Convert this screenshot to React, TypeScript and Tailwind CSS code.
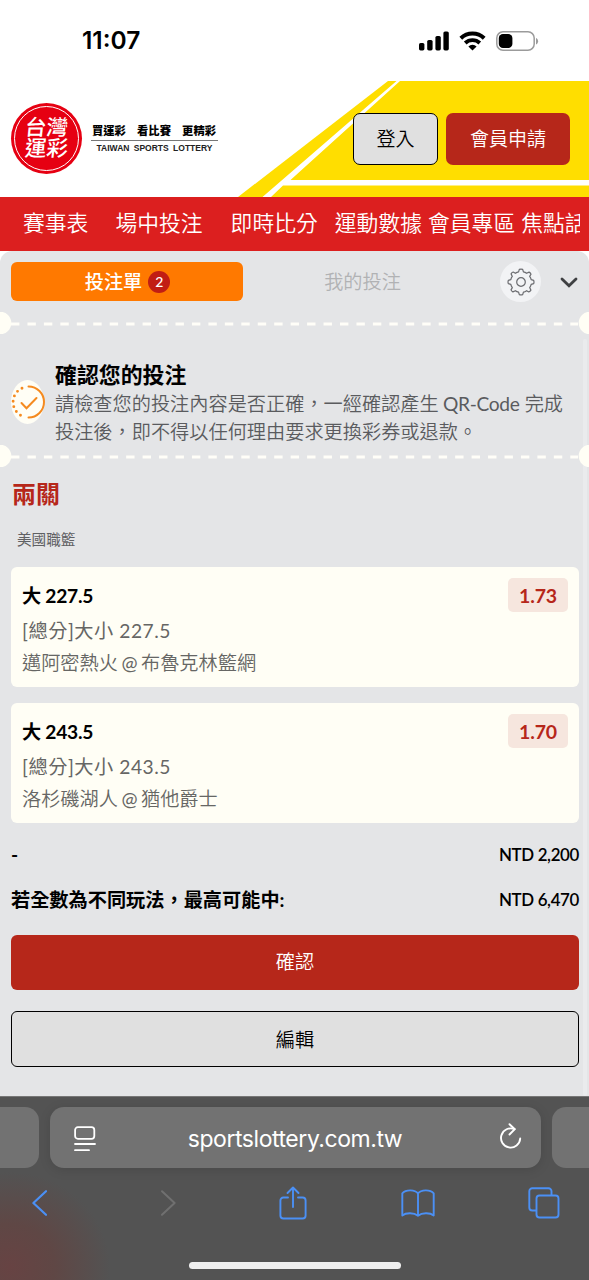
import type { ReactNode } from "react";
import { clsx } from "clsx";

type Pick = { title: string; market: string; away: string; home: string; odds: string };

const PICKS: Pick[] = [
  { title: "大 227.5", market: "[總分]大小 227.5", away: "邁阿密熱火",   home: "布魯克林籃網", odds: "1.73" },
  { title: "大 243.5", market: "[總分]大小 243.5", away: "洛杉磯湖人",   home: "猶他爵士",     odds: "1.70" },
];

const NAV = [
  { label: "賽事表",   gap: "mr-[27px]" },
  { label: "場中投注", gap: "mr-[28px]" },
  { label: "即時比分", gap: "mr-[17px]" },
  { label: "運動數據", gap: "mr-[6px]" },
  { label: "會員專區", gap: "mr-[6px]" },
  { label: "焦點話題", gap: "" },
];

export default function App() {
  return (
    <div className="flex flex-col w-[589px] h-[1280px] overflow-hidden bg-white font-[Lato,'Noto_Sans_CJK_TC',sans-serif]">
      <StatusBar />
      <Header />
      <NavBar />
      <BetSlip />
      <BrowserBar />
    </div>
  );
}

function StatusBar() {
  return (
    <div className="flex items-center justify-between h-[81px] shrink-0 pl-[82px] pr-[50px] font-[Inter,sans-serif]">
      <span className="text-[24.5px] font-semibold leading-[81px] text-black">11:07</span>
      <div className="flex items-center">
        <svg width="30" height="20" viewBox="0 0 30 20">
          <rect x="0" y="12" width="5.4" height="7.4" rx="1.6" />
          <rect x="8.2" y="9" width="5.4" height="10.4" rx="1.6" />
          <rect x="16.4" y="5" width="5.4" height="14.4" rx="1.6" />
          <rect x="24.4" y="0.5" width="5.4" height="18.9" rx="1.6" />
        </svg>
        <svg className="ml-[10px]" width="27" height="20" viewBox="0 0 27 20">
          <path d="M1.8 7.2a17 17 0 0 1 23.4 0" fill="none" stroke="#000" strokeWidth="4" />
          <path d="M6.2 12a10.6 10.6 0 0 1 14.6 0" fill="none" stroke="#000" strokeWidth="3.8" />
          <path d="M13.5 19.5 9.4 15.5a5.9 5.9 0 0 1 8.2 0z" />
        </svg>
        <svg className="ml-[10px]" width="43" height="20" viewBox="0 0 43 20">
          <rect x="0.8" y="0.8" width="37.4" height="18.4" rx="6.2" fill="none" stroke="#9b9b9b" strokeWidth="1.5" />
          <rect x="2.8" y="2.9" width="13.6" height="14.2" rx="4.2" />
          <path d="M40 7v6.4c1.3-.5 2.1-1.7 2.1-3.2S41.3 7.500 40 7z" fill="#9b9b9b" />
        </svg>
      </div>
    </div>
  );
}

function Header() {
  return (
    <header className="relative flex items-center h-[115.5px] shrink-0 pl-[11px] pr-[19px]">
      {/* yellow court stripes behind the buttons */}
      <svg className="absolute right-0 top-0" width="351" height="116" viewBox="0 0 351 116">
        <path d="M150 0H351V116H0z" fill="#ffde00" />
        <path d="M158.500 0h3.500L52.500 99H351v5.500H45L33 116h-8.500z" fill="#fff" />
      </svg>

      <div className="relative flex flex-col items-center justify-center size-[71px] rounded-full bg-[#e60012]">
        <div className="absolute inset-[3px] rounded-full border border-white" />
        <div className="text-white text-[21.500px] leading-[21px] font-medium text-center -mt-[1px]">
          <div className="-skew-x-6">台灣</div>
          <div className="-skew-x-6">運彩</div>
        </div>
      </div>

      <div className="relative w-[127px] ml-[9px] -mt-[3px]">
        <div className="flex justify-between pl-[1px] pr-[2px] text-[11.300px] leading-[17px] font-black text-black whitespace-nowrap">
          <span>買運彩</span><span>看比賽</span><span>更精彩</span>
        </div>
        <div className="h-px mt-[1px] bg-[#777]" />
        <div className="mt-[2px] text-center text-[8.500px] leading-[10px] font-bold whitespace-nowrap text-[#222] font-['Liberation_Sans',sans-serif] [word-spacing:2px]">
          TAIWAN SPORTS LOTTERY
        </div>
      </div>

      <div className="relative flex gap-2 ml-auto text-[19px] font-[350] mt-px">
        <button className="w-[85px] h-[52px] rounded-[7px] border-[1.500px] border-black bg-[#e0e0e0] text-black">登入</button>
        <button className="w-[124px] h-[52px] rounded-[7px] bg-[#b6271a] text-white">會員申請</button>
      </div>
    </header>
  );
}

function NavBar() {
  return (
    <nav className="h-[54.5px] shrink-0 bg-[#dc1f1f] pl-[23px] pr-[9px]">
      <div className="flex h-full items-center overflow-hidden text-[21.800px] text-white font-[350]">
        {NAV.map((n) => (
          <span key={n.label} className={clsx("shrink-0 whitespace-nowrap", n.gap)}>{n.label}</span>
        ))}
      </div>
    </nav>
  );
}

function BetSlip() {
  return (
    <main className="relative flex-1 min-h-0 rounded-t-[12px] bg-[#e4e5e7] text-[19.200px]">
      {/* scroll thumb */}
      <div className="absolute right-[2px] top-[88px] bottom-0 w-[4px] rounded-full bg-[#eaebed]" />

      {/* Tabs */}
      <div className="flex items-center h-[61px] pl-[11px] pr-[11px]">
        <div className="flex items-center justify-center w-[232px] h-[39px] pt-[1px] pl-[1px] rounded-[6px] bg-[#ff7900] text-white font-medium">
          投注單
          <span className="flex items-center justify-center size-[22px] ml-[6px] -mt-px rounded-full bg-[#c11d14] text-[14px]">2</span>
        </div>
        <div className="w-[239px] pt-[2px] text-center font-[350] text-[#b1b2b4]">我的投注</div>
        <div className="flex items-center justify-center size-[41px] ml-[18px] rounded-full bg-[#f2f3f5]">
          <Gear />
        </div>
        <svg className="ml-[19px] mt-[2px]" width="18" height="11" viewBox="0 0 18 11">
          <path d="M2 2l7 6.800L16 2" fill="none" stroke="#3f4042" strokeWidth="2.800" strokeLinecap="round" />
        </svg>
      </div>

      <Perforation />

      {/* Confirmation notice */}
      <div className="flex items-center h-[111px] pl-[11px]">
        <div className="flex items-center justify-center w-[33px] h-[44px] shrink-0 rounded-[50%] bg-[#fffef5] mt-[25px]">
          <ConfirmMark />
        </div>
        <div className="ml-[11px] pt-[27px] whitespace-nowrap">
          <div className="text-[21.900px] leading-[30px] font-bold text-black">確認您的投注</div>
          <div className="leading-[28px] font-[350] text-[#5a5b5e]">
            請檢查您的投注內容是否正確，一經確認產生 <span className="font-normal tracking-[-0.350px] -ml-px">QR-Code</span> 完成
            <br />
            投注後，即不得以任何理由要求更換彩券或退款。
          </div>
        </div>
      </div>

      <Perforation />

      <h2 className="mt-[9px] ml-[12px] text-[24px] leading-[36px] font-bold text-[#b6271a]">兩關</h2>
      <div className="mt-[17px] ml-[17px] text-[14.600px] leading-[22px] text-[#5f6063]">美國職籃</div>

      <div className="flex flex-col gap-4 mt-[16px] ml-[11px] mr-[10px]">
        {PICKS.map((p) => <PickCard key={p.title} pick={p} />)}
      </div>

      {/* Totals */}
      <TotalRow label="-" value="NTD 2,200" className="mt-[17px]" />
      <TotalRow label="若全數為不同玩法，最高可能中:" value="NTD 6,470" className="mt-[15px]" />

      <div className="flex flex-col gap-[21px] mt-[20px] ml-[11px] mr-[10px] font-[350]">
        <button className="h-[55px] rounded-[6px] bg-[#b6271a] text-white">確認</button>
        <button className="h-[56px] pt-[2px] rounded-[6px] border-[1.500px] border-black bg-[#e0e0e0] text-black">編輯</button>
      </div>
    </main>
  );
}

function PickCard({ pick }: { pick: Pick }) {
  return (
    <div className="flex justify-between h-[120px] rounded-[6px] bg-[#fffef5] pl-[11px] pr-[11px] pt-[11px]">
      <div className="pt-px whitespace-nowrap text-[#666664] font-[350]">
        <div className="leading-[34px] font-bold text-black tracking-[-0.250px]">{pick.title}</div>
        <div className="mt-[2px] leading-[32px] tracking-[0.550px] font-normal">{pick.market}</div>
        <div className="leading-[32px]">
          {pick.away}<span className="mx-[3.500px] font-normal">@</span>{pick.home}
        </div>
      </div>
      <div className="w-[60px] h-[34px] rounded-[5px] bg-[#f6e6de] text-center text-[19.500px] tracking-[-0.200px] leading-[35px] font-bold text-[#b6271a]">
        {pick.odds}
      </div>
    </div>
  );
}

function TotalRow({ label, value, className }: { label: string; value: string; className: string }) {
  return (
    <div className={clsx("flex items-center justify-between h-[30px] pl-[11px] pr-[10px] font-bold text-black", className)}>
      <span>{label}</span>
      <span className="text-[16.900px] font-semibold tracking-[-0.350px]">{value}</span>
    </div>
  );
}

// ticket tear line with a notch at each edge
function Perforation() {
  return (
    <svg className="relative block" width="589" height="22" viewBox="0 0 589 22">
      <path d="M11 12H578" stroke="#fffef8" strokeWidth="3" strokeDasharray="8.400 8.050" />
      <circle cx="0" cy="11" r="11.300" fill="#fffef5" />
      <circle cx="590" cy="11" r="11.300" fill="#fffef5" />
    </svg>
  );
}

function Gear() {
  return (
    <svg width="28" height="28" viewBox="-15 -15 30 30" fill="none" stroke="#6b6c70" strokeWidth="1.300" strokeLinejoin="round">
      <path d="M-1.800-13.600Q0-14.200 1.800-13.600L2.600-10.900Q4.500-10.500 6-9.300L8.700-10.600Q10.200-9.800 10.700-8.400L9.300-6Q10.600-4.300 10.900-2.600L13.600-1.800Q14.200 0 13.600 1.800L10.900 2.600Q10.500 4.500 9.300 6L10.600 8.700Q9.800 10.200 8.400 10.700L6 9.300Q4.300 10.600 2.600 10.900L1.800 13.600Q0 14.200-1.800 13.600L-2.600 10.900Q-4.500 10.500-6 9.300L-8.700 10.600Q-10.200 9.800-10.700 8.400L-9.300 6Q-10.600 4.300-10.900 2.600L-13.600 1.800Q-14.200 0-13.600-1.800L-10.900-2.600Q-10.500-4.500-9.300-6L-10.600-8.700Q-9.800-10.200-8.400-10.700L-6-9.300Q-4.300-10.600-2.600-10.900Z" />
      <circle r="4.600" />
    </svg>
  );
}

function ConfirmMark() {
  return (
    <svg className="shrink-0" width="34" height="34" viewBox="0 0 34 34" fill="none" stroke="#f58a1f" strokeLinecap="round">
      <path d="M17.500 1.500a15.500 15.500 0 0 1 0 31" strokeWidth="2" />
      <path d="M11 3.200A15.300 15.300 0 0 0 11 31" strokeWidth="2.900" strokeDasharray="0 5.500" />
      <path d="M10.500 18l5 5.200L25.500 13" strokeWidth="2" />
    </svg>
  );
}

function BrowserBar() {
  return (
    <footer className="flex flex-col h-[184px] shrink-0 bg-[#535353] bg-[radial-gradient(ellipse_100px_95px_at_10px_170px,#674343_0%,#5f4745_45%,#53535300_100%)] border-t border-[#777]">
      {/* Address pill between the edges of neighbouring tabs */}
      <div className="flex mt-[10px] gap-[11px] h-[61px] shrink-0">
        <div className="w-[39px] rounded-r-[14px] bg-[#727272]" />
        <div className="flex items-center w-[491px] rounded-[14px] bg-[#727272] pl-[24px] pr-[19px] pt-[2px] shadow-[0_2px_12px_rgba(0,0,0,0.12)]">
          <svg width="22" height="26" viewBox="0 0 22 26" fill="none" stroke="#fff" strokeWidth="1.800" strokeLinecap="round">
            <rect x="1.100" y="1.200" width="19.200" height="11.600" rx="2.800" />
            <path d="M1 18h20M1 24.200h14" />
          </svg>
          <span className="flex-1 pr-[5px] pt-px text-center text-[23px] text-white font-[Inter,sans-serif] tracking-[-0.450px]">sportslottery.com.tw</span>
          <svg className="-mt-[5px]" width="23" height="27" viewBox="0 0 23 27" fill="none" stroke="#fff" strokeWidth="1.900" strokeLinecap="round" strokeLinejoin="round">
            <path d="M15.500 6.200A9.600 9.600 0 1 0 21.200 15.500" />
            <path d="M10.500 1.200l5.300 5-5.300 5.300" />
          </svg>
        </div>
        <div className="w-[37px] rounded-l-[14px] bg-[#727272]" />
      </div>

      <div className="flex items-center h-[68px] pt-[2px] pl-[32px]">
        <ToolIcon w={15} h={26} gap="mr-[114px]"><path d="M14 1.200L1.400 13L14 24.800" strokeWidth="2.200" /></ToolIcon>
        <ToolIcon w={15} h={26} gap="mr-[103px]" muted><path d="M1 1.200L13.600 13L1 24.800" strokeWidth="2" /></ToolIcon>
        <ToolIcon w={28} h={34} gap="mr-[94px]">
          <path d="M9 11.500H4.400a3 3 0 0 0-3 3V29.500a3 3 0 0 0 3 3H23.600a3 3 0 0 0 3-3V14.500a3 3 0 0 0-3-3H19" />
          <path d="M14 21V1.500M8.500 7L14 1.500L19.500 7" />
        </ToolIcon>
        <ToolIcon w={34} h={28} gap="mr-[93px]">
          <path d="M17 4.500C14 .5 5 .2 1.300 4.300V26.500C5 23.500 13 23.500 17 26.800C21 23.500 29 23.500 32.700 26.500V4.300C29 .2 20 .5 17 4.500zV26.800" />
        </ToolIcon>
        <ToolIcon w={32} h={32} gap="">
          <path d="M23.500 8V4.300a3 3 0 0 0-3-3H4.300a3 3 0 0 0-3 3V20.500a3 3 0 0 0 3 3H8" />
          <rect x="8.500" y="8.500" width="22" height="22" rx="3" />
        </ToolIcon>
      </div>

      <div className="mx-auto mt-[26px] w-[212px] h-[7px] rounded-full bg-[#efefef] shrink-0" />
    </footer>
  );
}

function ToolIcon({ w, h, gap, muted, children }: { w: number; h: number; gap: string; muted?: boolean; children: ReactNode }) {
  return (
    <svg width={w} height={h} viewBox={`0 0 ${w} ${h}`} fill="none" strokeWidth="1.900" strokeLinecap="round" strokeLinejoin="round"
      className={clsx("shrink-0", gap, muted ? "stroke-[#707070]" : "stroke-[#4b90f5]")}>
      {children}
    </svg>
  );
}
